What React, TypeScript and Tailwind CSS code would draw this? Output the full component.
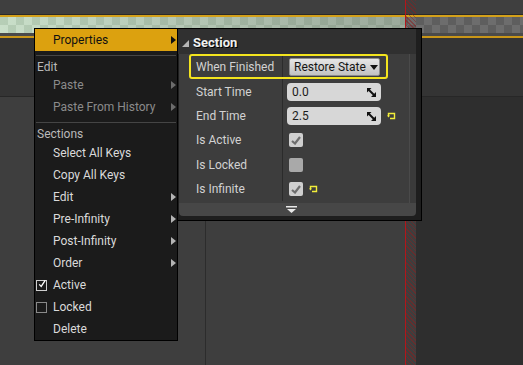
import React from 'react';

const SubArrow = ({ color }: { color: string }) => (
  <svg width="5" height="8" viewBox="0 0 5 8" className="shrink-0">
    <path d="M0 0 L5 4 L0 8 Z" fill={color} />
  </svg>
);

const SpinIcon = () => (
  <svg width="9" height="9" viewBox="0 0 9 9" className="shrink-0">
    <path d="M0 0 H4.5 L0 4.5 Z" fill="#111" />
    <path d="M9 9 H4 L9 4 Z" fill="#111" />
    <path d="M1.5 1.5 L7.5 7.5" stroke="#111" strokeWidth="2" />
  </svg>
);

const ResetIcon = () => (
  <svg width="9" height="8" viewBox="0 0 9 8" className="shrink-0">
    <path d="M1.5 4 V1.5 H7.5 V6.5 H3" fill="none" stroke="#f2ee3a" strokeWidth="1.4" />
    <path d="M0 3.5 H3 L1.5 5.5 Z" fill="#f2ee3a" />
  </svg>
);

const PropCheck = ({ checked, dim }: { checked?: boolean; dim?: boolean }) => (
  <div
    className={`ml-[6px] w-[14px] h-[14px] rounded-[2px] flex items-center justify-center ${
      dim ? 'bg-[#a9a9a9]' : 'bg-[#cfcfcf]'
    }`}
  >
    {checked && (
      <svg width="10" height="9" viewBox="0 0 10 9">
        <path d="M1 5 L4 7.5 L9 1" fill="none" stroke="#6e6e6e" strokeWidth="2.2" />
      </svg>
    )}
  </div>
);

const MenuCheck = ({ checked }: { checked?: boolean }) => (
  <div
    className={`ml-[1px] w-[11px] h-[11px] border flex items-center justify-center ${
      checked ? 'border-[#cfcfcf]' : 'border-[#8a8a8a]'
    }`}
  >
    {checked && (
      <svg width="10" height="10" viewBox="0 0 10 10" className="-mt-[2px] ml-[1px]">
        <path d="M1.5 5.5 L4 8 L9 0.5" fill="none" stroke="#ffffff" strokeWidth="1.6" />
      </svg>
    )}
  </div>
);

const NumberBox = ({ value }: { value: string }) => (
  <div className="ml-[4px] w-[94px] h-[18px] rounded-[4px] bg-[#d7d7d7] flex items-center justify-between pl-[5px] pr-[5px] text-[#1c1c1c]">
    <span>{value}</span>
    <SpinIcon />
  </div>
);

const sectionItems = [
  { label: 'Select All Keys' },
  { label: 'Copy All Keys' },
  { label: 'Edit', sub: true },
  { label: 'Pre-Infinity', sub: true },
  { label: 'Post-Infinity', sub: true },
  { label: 'Order', sub: true },
  { label: 'Active', check: 'on' },
  { label: 'Locked', check: 'off' },
  { label: 'Delete' },
];

const ContextMenu = () => (
  <div className="absolute left-[34px] top-[28px] w-[144px] h-[313px] bg-[#1b1b1b] border border-black flex flex-col text-[12px] text-[#dadada]">
    <div className="h-[22px] bg-[#dca10f] flex items-center justify-between pl-[18px] pr-[1px] text-[#111]">
      <span>Properties</span>
      <SubArrow color="#111" />
    </div>
    <div className="h-[8px] flex items-center px-[1px]">
      <div className="h-[1px] w-full bg-[#454545]" />
    </div>
    <div className="h-[15px] flex items-center pl-[2px] text-[#b9b9b9]">Edit</div>
    <div className="h-[22px] flex items-center justify-between pl-[18px] pr-[1px] text-[#8b8b8b]">
      <span>Paste</span>
      <SubArrow color="#6c6c6c" />
    </div>
    <div className="h-[22px] flex items-center justify-between pl-[18px] pr-[1px] text-[#8b8b8b]">
      <span>Paste From History</span>
      <SubArrow color="#6c6c6c" />
    </div>
    <div className="h-[8px] flex items-center px-[1px]">
      <div className="h-[1px] w-full bg-[#454545]" />
    </div>
    <div className="h-[16px] flex items-center pl-[2px] text-[#b9b9b9]">Sections</div>
    {sectionItems.map(({ label, sub, check }) => (
      <div key={label} className="h-[22px] flex items-center pr-[1px]">
        <div className="w-[17px] flex items-center">
          {check && <MenuCheck checked={check === 'on'} />}
        </div>
        <span className="flex-1 pl-[1px]">{label}</span>
        {sub && <SubArrow color="#b4b4b4" />}
      </div>
    ))}
  </div>
);

const rows = [
  { label: 'Start Time', kind: 'num', value: '0.0', h: 'h-[24px]' },
  { label: 'End Time', kind: 'num', value: '2.5', reset: true, h: 'h-[24px]' },
  { label: 'Is Active', kind: 'check', checked: true, h: 'h-[24px]' },
  { label: 'Is Locked', kind: 'check', dim: true, h: 'h-[25px]' },
  { label: 'Is Infinite', kind: 'check', checked: true, reset: true, h: 'h-[24px]' },
];

const DetailsPanel = () => (
  <div className="absolute left-[177px] top-[28px] w-[245px] h-[193px] bg-[#1e1e1e] border border-black pl-[1px] pr-[5px] pb-[4px] flex flex-col text-[12px]">
    <div className="h-[25px] bg-[#303030] flex items-center pl-[4px] pt-[3px] -ml-[1px]">
      <svg width="7" height="7" viewBox="0 0 7 7">
        <path d="M7 0 V7 H0 Z" fill="#b5b5b5" />
      </svg>
      <span className="ml-[4px] text-[13px] font-bold text-[#f0f0f0] [text-shadow:1px_1px_0_#000]">
        Section
      </span>
    </div>
    <div className="relative h-[147px] bg-[#3d3d3d] flex">
      <div className="flex-1 flex flex-col">
        <div className="h-[26px] flex">
          <div className="w-[104px] border-r border-[#2b2b2b] flex items-center pl-[17px] pb-[1px] text-[#d2d2d2]">
            When Finished
          </div>
          <div className="flex-1 flex items-start pt-[4px]">
            <div className="ml-[6px] w-[91px] h-[18px] rounded-[2px] border border-[#8c8c8c] bg-[linear-gradient(#e6e6e6,#c2c2c2)] flex items-center pl-[4px] text-[#151515]">
              <span>Restore State</span>
              <svg width="8" height="5" viewBox="0 0 8 5" className="ml-[4px]">
                <path d="M0 0 H8 L4 5 Z" fill="#111" />
              </svg>
            </div>
          </div>
        </div>
        {rows.map(({ label, kind, value, reset, checked, dim, h }) => (
          <div key={label} className={`${h} flex`}>
            <div className="w-[104px] border-r border-[#2b2b2b] flex items-center pl-[17px] text-[#d2d2d2]">
              {label}
            </div>
            <div className="flex-1 flex items-center gap-[6px]">
              {kind === 'num' ? <NumberBox value={value as string} /> : <PropCheck checked={checked} dim={dim} />}
              {reset && <ResetIcon />}
            </div>
          </div>
        ))}
      </div>
      <div className="w-[7px] border-l border-[#4a4a4a] bg-[#3a3a3a]" />
      <div className="absolute left-[10px] top-0 w-[199px] h-[25px] rounded-[3px] border-2 border-[#f3e41e]" />
    </div>
    <div className="h-[2px] bg-[#3d3d3d] flex justify-end">
      <div className="w-[7px] border-l border-[#4a4a4a] bg-[#3a3a3a]" />
    </div>
    <div className="h-[13px] bg-[#474747] rounded-b-[4px] flex items-center pl-[107px]">
      <svg width="11" height="7" viewBox="0 0 11 7">
        <rect x="0" y="0" width="11" height="1.5" fill="#e8e8e8" />
        <path d="M1 3 H10 L5.5 7 Z" fill="#e8e8e8" />
      </svg>
    </div>
  </div>
);

export default function App() {
  return (
    <div className="relative w-[523px] h-[365px] overflow-hidden bg-[#3e3e3e] flex flex-col font-['Roboto',sans-serif]">
      <div className="h-[14px] bg-[#3f3f3f]" />
      <div className="h-[1px] bg-[#2a2a2a]" />
      <div className="h-[2px] bg-[#d3a01a]" />
      <div className="h-[16px] flex">
        <div className="w-[405px] [background-image:linear-gradient(to_right,rgba(0,0,0,0),rgba(70,70,70,0.35)),repeating-conic-gradient(#c9dfc9_0%_25%,#b6ceb6_0%_50%)] [background-size:100%_100%,16px_16px]" />
        <div className="flex-1 [background-image:repeating-conic-gradient(#6d6d6d_0%_25%,#5e5e5e_0%_50%)] [background-size:16px_16px] [background-position:-5px_0]" />
      </div>
      <div className="h-[3px] bg-[#4a4a4a]" />
      <div className="h-[2px] bg-[#c99618]" />
      <div className="h-[59px] bg-[#343434] border-b border-[#272727]" />
      <div className="flex-1 flex">
        <div className="w-[405px] flex">
          <div className="w-[206px] border-r border-[#2c2c2c]" />
          <div className="flex-1" />
        </div>
        <div className="w-[11px]" />
        <div className="flex-1 bg-[#2e2e2e]" />
      </div>

      {/* playback range marker */}
      <div className="absolute left-[405px] top-0 w-[11px] h-[365px] border-l border-[#b3161b] [background-image:repeating-linear-gradient(45deg,rgba(140,30,30,0.5)_0px,rgba(140,30,30,0.5)_1px,transparent_1px,transparent_3px)]" />

      <ContextMenu />
      <DetailsPanel />
    </div>
  );
}
